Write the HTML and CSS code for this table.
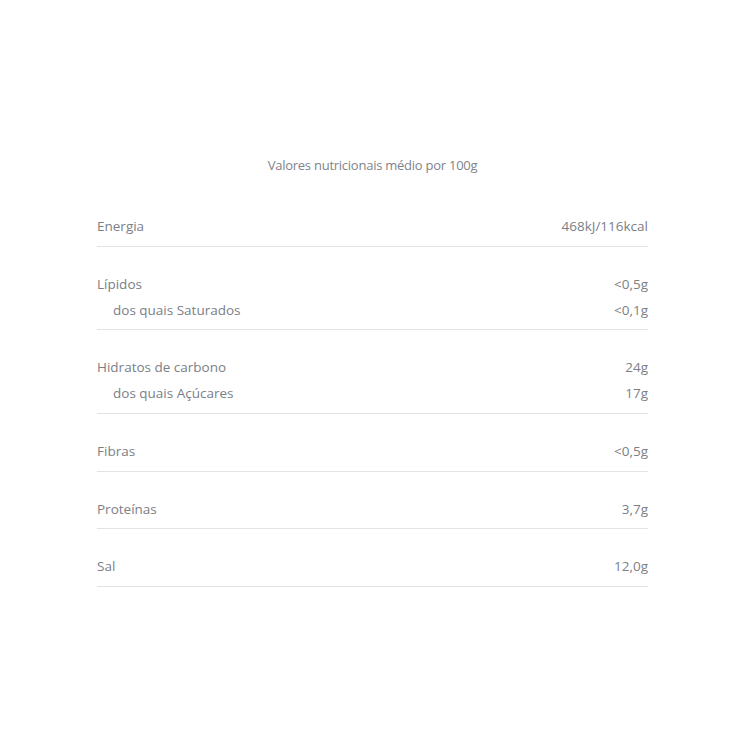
FILE: index.html
```html
<!DOCTYPE html>
<html lang="pt">
<head>
<meta charset="utf-8">
<link rel="stylesheet" href="styles.css">
</head>
<body>
<main class="wrap">
  <h2 class="title">Valores nutricionais médio por 100g</h2>
  <div class="table">
    <div class="group">
      <div class="row"><span>Energia</span><span>468kJ/116kcal</span></div>
    </div>
    <div class="group">
      <div class="row"><span>Lípidos</span><span>&lt;0,5g</span></div>
      <div class="row sub"><span>dos quais Saturados</span><span>&lt;0,1g</span></div>
    </div>
    <div class="group">
      <div class="row"><span>Hidratos de carbono</span><span>24g</span></div>
      <div class="row sub"><span>dos quais Açúcares</span><span>17g</span></div>
    </div>
    <div class="group">
      <div class="row"><span>Fibras</span><span>&lt;0,5g</span></div>
    </div>
    <div class="group">
      <div class="row"><span>Proteínas</span><span>3,7g</span></div>
    </div>
    <div class="group">
      <div class="row"><span>Sal</span><span>12,0g</span></div>
    </div>
  </div>
</main>
</body>
</html>
```
FILE: styles.css
```css
html, body {
  margin: 0;
  padding: 0;
  background: #ffffff;
}
body {
  font-family: "Open Sans", "Noto Sans", sans-serif;
  color: #7b8087;
}
.wrap {
  width: 551px;
  margin-left: 97px;
  padding-top: 155px;
}
.title {
  margin: 0;
  font-size: 13px;
  font-weight: 400;
  line-height: 20px;
  text-align: center;
  letter-spacing: -0.25px;
  color: #7f848a;
}
.table {
  margin-top: 14px;
}
.group {
  padding: 25px 0 6px;
  border-bottom: 1px solid #e3e3e3;
}
.row {
  display: flex;
  justify-content: space-between;
  font-size: 13.5px;
  line-height: 25.75px;
}
.row.sub span:first-child {
  padding-left: 16px;
}
```
